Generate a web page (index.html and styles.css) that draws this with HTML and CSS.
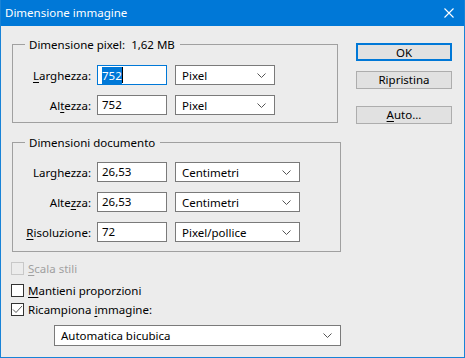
FILE: index.html
```html
<!DOCTYPE html>
<html lang="it">
<head>
  <meta charset="UTF-8" />
  <meta name="viewport" content="width=device-width, initial-scale=1.0" />
  <title>Dimensione immagine</title>
  <link rel="stylesheet" href="styles.css">
</head>
<body>
  <div class="window" role="dialog" aria-label="Dimensione immagine">
    <div class="titlebar">
      <span class="title">Dimensione immagine</span>
      <svg class="close" width="10" height="10" viewBox="0 0 10 10">
        <path d="M0.5 0.5 L9.5 9.5 M9.5 0.5 L0.5 9.5" stroke="#fff" stroke-width="1.1" fill="none" />
      </svg>
    </div>

    <div class="content">
      <div class="main">
        <fieldset class="group group-pixel">
          <legend>Dimensione pixel:&nbsp; 1,62 MB</legend>
          <div class="row">
            <label class="lbl"><u>L</u>arghezza:</label>
            <div class="field focused"><span class="selected">752</span><span class="caret"></span></div>
            <div class="select">Pixel
              <svg class="chev" width="9" height="5" viewBox="0 0 9 5"><path d="M0.5 0.5 L4.5 4.5 L8.5 0.5" stroke="#555" fill="none" /></svg>
            </div>
          </div>
          <div class="row">
            <label class="lbl">Al<u>t</u>ezza:</label>
            <div class="field">752</div>
            <div class="select">Pixel
              <svg class="chev" width="9" height="5" viewBox="0 0 9 5"><path d="M0.5 0.5 L4.5 4.5 L8.5 0.5" stroke="#555" fill="none" /></svg>
            </div>
          </div>
        </fieldset>

        <fieldset class="group group-doc">
          <legend>Dimensioni documento</legend>
          <div class="row">
            <label class="lbl">Lar<u>g</u>hezza:</label>
            <div class="field">26,53</div>
            <div class="select">Centimetri
              <svg class="chev" width="9" height="5" viewBox="0 0 9 5"><path d="M0.5 0.5 L4.5 4.5 L8.5 0.5" stroke="#555" fill="none" /></svg>
            </div>
          </div>
          <div class="row">
            <label class="lbl">Alte<u>z</u>za:</label>
            <div class="field">26,53</div>
            <div class="select">Centimetri
              <svg class="chev" width="9" height="5" viewBox="0 0 9 5"><path d="M0.5 0.5 L4.5 4.5 L8.5 0.5" stroke="#555" fill="none" /></svg>
            </div>
          </div>
          <div class="row">
            <label class="lbl"><u>R</u>isoluzione:</label>
            <div class="field">72</div>
            <div class="select">Pixel/pollice
              <svg class="chev" width="9" height="5" viewBox="0 0 9 5"><path d="M0.5 0.5 L4.5 4.5 L8.5 0.5" stroke="#555" fill="none" /></svg>
            </div>
          </div>
        </fieldset>

        <div class="check check-scale disabled">
          <span class="box"></span>
          <span><u>S</u>cala stili</span>
        </div>
        <div class="check check-keep">
          <span class="box"></span>
          <span><u>M</u>antieni proporzioni</span>
        </div>
        <div class="check check-resample">
          <span class="box">
            <svg width="11" height="11" viewBox="0 0 11 11"><path d="M1 5.5 L4 8.5 L10 2" stroke="#444" stroke-width="0.9" fill="none" /></svg>
          </span>
          <span>Ricampiona <u>i</u>mmagine:</span>
        </div>
        <div class="select select-wide">Automatica bicubica
          <svg class="chev" width="9" height="5" viewBox="0 0 9 5"><path d="M0.5 0.5 L4.5 4.5 L8.5 0.5" stroke="#555" fill="none" /></svg>
        </div>
      </div>

      <div class="buttons">
        <button class="btn btn-default">OK</button>
        <button class="btn">Ripristina</button>
        <button class="btn btn-auto"><u>A</u>uto...</button>
      </div>
    </div>
  </div>
</body>
</html>
```

FILE: styles.css
```css
* { box-sizing: border-box; }
body {
  margin: 0;
  font-family: 'Noto Sans', sans-serif;
  font-size: 11.5px;
  color: #000;
  background: #ececec;
}
u { text-decoration-thickness: 1px; text-underline-offset: 2px; }

.window {
  width: 465px;
  height: 358px;
  border: 1px solid #1883d7;
  border-top: none;
  background: #ececec;
}
.titlebar {
  height: 26px;
  background: #0078d7;
  color: #fff;
  display: flex;
  align-items: center;
  justify-content: space-between;
  padding: 0 10px 0 4px;
}
.title { line-height: 16px; }

.content {
  display: flex;
  padding: 11px 0 0 11px;
}
.main {
  width: 329px;
  display: flex;
  flex-direction: column;
}

.group {
  margin: 0;
  padding: 0 0 7px 0;
  border: 1px solid #a0a0a0;
  display: flex;
  flex-direction: column;
  gap: 10px;
}
.group legend {
  margin-left: 12px;
  padding: 0 5px 0 4px;
  line-height: 15px;
}
.group-pixel {
  width: 326px;
  padding-top: 13px;
}
.group-doc {
  width: 329px;
  margin-top: 12px;
  padding-top: 12px;
  padding-bottom: 9px;
}

.row {
  display: flex;
  align-items: center;
  height: 20px;
}
.lbl {
  width: 78px;
  text-align: right;
  margin-right: 6px;
}
.field {
  width: 70px;
  height: 20px;
  border: 1px solid #7a7a7a;
  background: #fff;
  padding: 0 4px;
  line-height: 18px;
  margin-right: 8px;
  display: flex;
  align-items: center;
}
.field.focused { border-color: #0078d7; }
.selected {
  background: #0078d7;
  color: #fff;
  line-height: 17px;
}
.caret {
  width: 1px;
  height: 16px;
  background: #000;
}

.select {
  width: 100px;
  height: 20px;
  border: 1px solid #7a7a7a;
  background: #fff;
  padding: 0 8px 0 6px;
  display: flex;
  align-items: center;
  justify-content: space-between;
}
.group-doc .select { width: 125px; }
.chev { flex: none; }

.check {
  display: flex;
  align-items: center;
  height: 17px;
  margin-left: -1px;
}
.check .box {
  width: 13px;
  height: 13px;
  border: 1px solid #333;
  background: #fff;
  margin-right: 4px;
  display: flex;
  align-items: center;
  justify-content: center;
}
.check.disabled { color: #a0a0a0; }
.check.disabled .box { border-color: #c8c8c8; background: #ececec; }
.check-scale { margin-top: 8px; }
.check-keep { margin-top: 5px; }
.check-resample { margin-top: 2px; }

.select-wide {
  width: 287px;
  height: 21px;
  margin: 7px 0 0 42px;
}

.buttons {
  display: flex;
  flex-direction: column;
  margin: 6px 0 0 15px;
}
.btn {
  width: 96px;
  height: 18px;
  padding: 0;
  font: inherit;
  color: #000;
  background: #e1e1e1;
  border: 1px solid #adadad;
  line-height: 16px;
}
.btn + .btn { margin-top: 10px; }
.btn-default { border: 2px solid #0078d7; }
.btn-auto { margin-top: 17px !important; }
```
